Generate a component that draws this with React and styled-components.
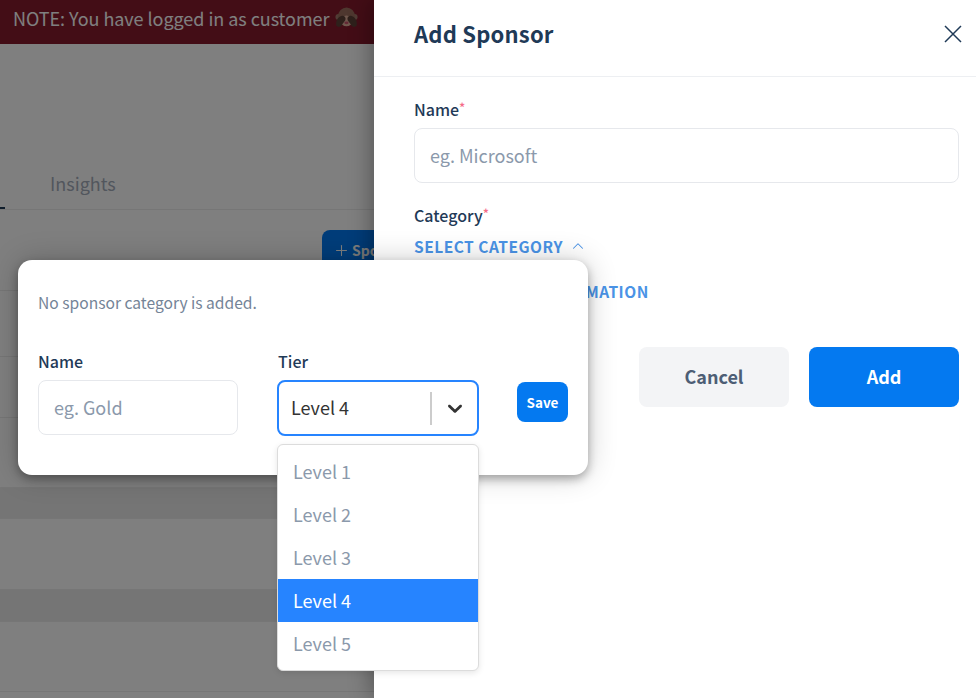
import React from 'react'
import styled, { createGlobalStyle } from 'styled-components'
import { ChevronUp, Plus } from 'lucide-react'

const GlobalStyle = createGlobalStyle`
  html, body {
    margin: 0;
    padding: 0;
    height: 100%;
    overflow: hidden;
    background: #fff;
  }
  * {
    box-sizing: border-box;
  }
  body {
    font-family: "Noto Sans CJK SC", "Noto Sans", sans-serif;
  }
`

const levels = ['Level 1', 'Level 2', 'Level 3', 'Level 4', 'Level 5']
const selectedLevel = 'Level 4'

// rows of the page behind the drawer
const rows = [
  { height: 66 },
  { height: 61 },
  { height: 70 },
  { height: 31, head: true },
  { height: 71 },
  { height: 32, head: true },
  { height: 70 },
  { height: 20 }
]

function MonkeyIcon() {
  return (
    <svg width="23" height="21" viewBox="0 0 24 22">
      <circle cx="3.6" cy="10.6" r="3.2" fill="#a1786a" />
      <circle cx="20.4" cy="10.6" r="3.2" fill="#a1786a" />
      <ellipse cx="12" cy="9.6" rx="8.8" ry="9" fill="#9c6f5f" />
      <ellipse cx="12" cy="14.6" rx="6.2" ry="5.6" fill="#dfae9a" />
      <ellipse cx="12" cy="16.6" rx="2.2" ry="1.5" fill="#c9516b" />
      <path d="M1.2 19.4C.6 14.8 2.8 10.2 6.6 9.4c2.8-.6 4.6 1 4.4 3.2-.2 2.2-2 3.4-3 5-.8 1.4-1.6 3-3.4 3.2-1.6.2-2.2-.4-3.4-1.4z" fill="#5d4037" />
      <path d="M22.8 19.4c.6-4.6-1.6-9.2-5.4-10-2.8-.6-4.6 1-4.4 3.2.2 2.2 2 3.4 3 5 .8 1.4 1.6 3 3.4 3.2 1.6.2 2.2-.4 3.4-1.4z" fill="#5d4037" />
    </svg>
  )
}

function CloseIcon() {
  return (
    <svg width="18" height="18" viewBox="0 0 18 18" fill="none" stroke="#1f3a57" strokeWidth="1.5">
      <path d="M1 1L17 17M17 1L1 17" />
    </svg>
  )
}

function SelectArrow() {
  return (
    <svg width="24" height="24" viewBox="0 0 20 20" fill="#333">
      <path d="M4.516 7.548c0.436-0.446 1.043-0.481 1.576 0l3.908 3.747 3.908-3.747c0.533-0.481 1.141-0.446 1.574 0 0.436 0.445 0.408 1.197 0 1.615-0.406 0.418-4.695 4.502-4.695 4.502-0.217 0.223-0.502 0.335-0.787 0.335s-0.57-0.112-0.789-0.335c0 0-4.287-4.084-4.695-4.502s-0.436-1.17 0-1.615z" />
    </svg>
  )
}

export default function App() {
  return (
    <Screen>
      <GlobalStyle />

      <Page>
        <Banner>
          NOTE: You have logged in as customer
          <MonkeyIcon />
        </Banner>
        <TabBar>
          <ActiveTab />
          <Tab>Insights</Tab>
        </TabBar>
        <Toolbar>
          <SponsorButton>
            <Plus size={17} strokeWidth={1.5} />
            Sponsor
          </SponsorButton>
        </Toolbar>
        {rows.map((row, i) => (
          <Row key={i} $height={row.height} $head={row.head} />
        ))}
      </Page>

      <Scrim />

      <Drawer>
        <DrawerHeader>
          <DrawerTitle>Add Sponsor</DrawerTitle>
          <CloseButton>
            <CloseIcon />
          </CloseButton>
        </DrawerHeader>
        <DrawerBody>
          <FieldLabel>Name<Required>*</Required></FieldLabel>
          <TextField $width="545px" placeholder="eg. Microsoft" />
          <CategoryLabel>Category<Required>*</Required></CategoryLabel>
          <LinkButton>
            SELECT CATEGORY
            <ChevronUp size={18} strokeWidth={1.4} />
          </LinkButton>
          <InfoLink>ADD SPONSOR INFORMATION</InfoLink>
          <Actions>
            <CancelButton>Cancel</CancelButton>
            <AddButton>Add</AddButton>
          </Actions>
        </DrawerBody>
      </Drawer>

      <Popup>
        <EmptyNote>No sponsor category is added.</EmptyNote>
        <PopupRow>
          <PopupField>
            <PopupLabel>Name</PopupLabel>
            <TextField $width="200px" placeholder="eg. Gold" />
          </PopupField>
          <PopupField>
            <PopupLabel>Tier</PopupLabel>
            <SelectBox>
              <SelectValue>{selectedLevel}</SelectValue>
              <SelectDivider />
              <SelectArrow />
            </SelectBox>
            <Menu>
              {levels.map(level => (
                <MenuOption key={level} $selected={level === selectedLevel}>{level}</MenuOption>
              ))}
            </Menu>
          </PopupField>
          <SaveButton>Save</SaveButton>
        </PopupRow>
      </Popup>
    </Screen>
  )
}

const Screen = styled.div`
  position: relative;
  width: 976px;
  height: 698px;
  overflow: hidden;
`

const Page = styled.div`
  display: flex;
  flex-direction: column;
  width: 100%;
  height: 100%;
  overflow: hidden;
  background: #fff;
`

const Banner = styled.div`
  display: flex;
  flex-shrink: 0;
  align-items: center;
  gap: 6px;
  height: 44px;
  padding: 0 0 9px 13px;
  background: #861a2c;
  color: #fff;
  font-size: 18px;
  letter-spacing: -0.05px;
`

const TabBar = styled.div`
  display: flex;
  flex-shrink: 0;
  align-items: flex-end;
  height: 166px;
  border-bottom: 1px solid #ececec;
`

const ActiveTab = styled.div`
  width: 5px;
  height: 2px;
  background: #1f3a57;
`

const Tab = styled.div`
  margin-left: 45px;
  padding-bottom: 13px;
  color: #a4adbb;
  font-size: 18px;
  line-height: 26px;
`

const Toolbar = styled.div`
  display: flex;
  align-items: flex-start;
  flex-shrink: 0;
  height: 81px;
  padding: 20px 0 0 322px;
  border-bottom: 1px solid #ececec;
`

const SponsorButton = styled.button`
  display: flex;
  align-items: center;
  gap: 2px;
  height: 40px;
  padding: 0 16px 0 11px;
  border: 0;
  border-radius: 8px;
  background: #007bf5;
  color: #fff;
  font: 600 14px "Noto Sans CJK SC", sans-serif;
`

const Row = styled.div`
  flex-shrink: 0;
  height: ${p => p.$height}px;
  border-bottom: 1px solid #ececec;
  background: ${p => (p.$head ? '#ebebeb' : '#fff')};
`

const Scrim = styled.div`
  position: absolute;
  inset: 0;
  background: rgba(0, 0, 0, 0.5);
`

const Drawer = styled.aside`
  position: absolute;
  top: 0;
  right: 0;
  bottom: 0;
  width: 602px;
  background: #fff;
  box-shadow: -4px 0 20px rgba(0, 0, 0, 0.3);
`

const DrawerHeader = styled.header`
  display: flex;
  align-items: center;
  justify-content: space-between;
  height: 77px;
  padding: 0 14px 9px 40px;
  border-bottom: 1px solid #edeff2;
`

const DrawerTitle = styled.h2`
  margin: 0 0 2px;
  color: #1f3a57;
  font-size: 22px;
  font-weight: 700;
  letter-spacing: 0.2px;
`

const CloseButton = styled.button`
  display: flex;
  padding: 0;
  border: 0;
  background: none;
`

const DrawerBody = styled.div`
  display: flex;
  flex-direction: column;
  align-items: flex-start;
  padding: 20px 17px 0 40px;
`

const FieldLabel = styled.label`
  margin-bottom: 7px;
  color: #1f3a57;
  font-size: 16px;
  font-weight: 500;
  line-height: 24px;
`

const CategoryLabel = styled(FieldLabel)`
  margin: 20px 0 7px;
`

const Required = styled.span`
  position: relative;
  top: -3px;
  color: #f56c88;
  font-size: 13px;
  line-height: 0;
`

const TextField = styled.input`
  width: ${p => p.$width};
  height: 55px;
  padding: 0 15px 2px;
  border: 1px solid #e6e8ec;
  border-radius: 8px;
  outline: none;
  background: #fff;
  font: 400 18px "Noto Sans CJK SC", sans-serif;

  &::placeholder {
    color: #8b99ab;
    opacity: 1;
  }
`

const LinkButton = styled.button`
  display: flex;
  align-items: center;
  gap: 6px;
  height: 24px;
  padding: 0;
  border: 0;
  background: none;
  color: #4a93e6;
  font: 600 15.5px "Noto Sans CJK SC", sans-serif;
  letter-spacing: 0.5px;
`

const InfoLink = styled(LinkButton)`
  margin-top: 21px;
`

const Actions = styled.div`
  display: flex;
  gap: 20px;
  align-self: flex-end;
  margin-top: 44px;
`

const ActionButton = styled.button`
  width: 150px;
  height: 60px;
  padding: 0 0 2px;
  border: 0;
  border-radius: 8px;
  font: 700 18px "Noto Sans CJK SC", sans-serif;
`

const CancelButton = styled(ActionButton)`
  background: #f3f4f6;
  color: #4d5e75;
`

const AddButton = styled(ActionButton)`
  background: #0479f0;
  color: #fff;
`

const Popup = styled.div`
  position: absolute;
  top: 260px;
  left: 18px;
  width: 570px;
  height: 215px;
  padding: 30px 20px 0;
  border-radius: 14px;
  background: #fff;
  box-shadow: 0 4px 10px rgba(0, 0, 0, 0.3), 0 0 30px rgba(0, 0, 0, 0.2);
`

const EmptyNote = styled.p`
  margin: 0 0 35px;
  color: #748497;
  font-size: 15.6px;
  line-height: 24px;
`

const PopupRow = styled.div`
  display: flex;
  gap: 40px;
`

const PopupField = styled.div`
  position: relative;
  display: flex;
  flex-direction: column;
`

const PopupLabel = styled.label`
  margin-bottom: 7px;
  color: #1f3a57;
  font-size: 16px;
  font-weight: 500;
  line-height: 24px;
`

const SelectBox = styled.div`
  display: flex;
  align-items: center;
  width: 202px;
  height: 56px;
  margin-left: -1px;
  padding: 0 10px 0 12px;
  border: 2px solid #2684ff;
  border-radius: 8px;
  background: #fff;
`

const SelectValue = styled.span`
  flex: 1;
  padding-bottom: 2px;
  color: #333;
  font-size: 18px;
`

const SelectDivider = styled.span`
  width: 2px;
  height: 33px;
  margin-right: 11px;
  background: #ccc;
`

const Menu = styled.ul`
  position: absolute;
  top: 95px;
  left: -1px;
  width: 202px;
  margin: 0;
  padding: 5px 0;
  border: 1px solid #dcdcdc;
  border-radius: 6px;
  list-style: none;
  background: #fff;
  box-shadow: 0 2px 6px rgba(0, 0, 0, 0.1);
`

const MenuOption = styled.li`
  height: 43px;
  padding-left: 15px;
  background: ${p => (p.$selected ? '#2684ff' : '#fff')};
  color: ${p => (p.$selected ? '#fff' : '#8b99ab')};
  font-size: 18px;
  line-height: 43px;
`

const SaveButton = styled.button`
  align-self: flex-start;
  width: 51px;
  height: 40px;
  margin: 33px 0 0 -2px;
  padding: 0;
  border: 0;
  border-radius: 8px;
  background: #0479f0;
  color: #fff;
  font: 700 13.5px "Noto Sans CJK SC", sans-serif;
`
